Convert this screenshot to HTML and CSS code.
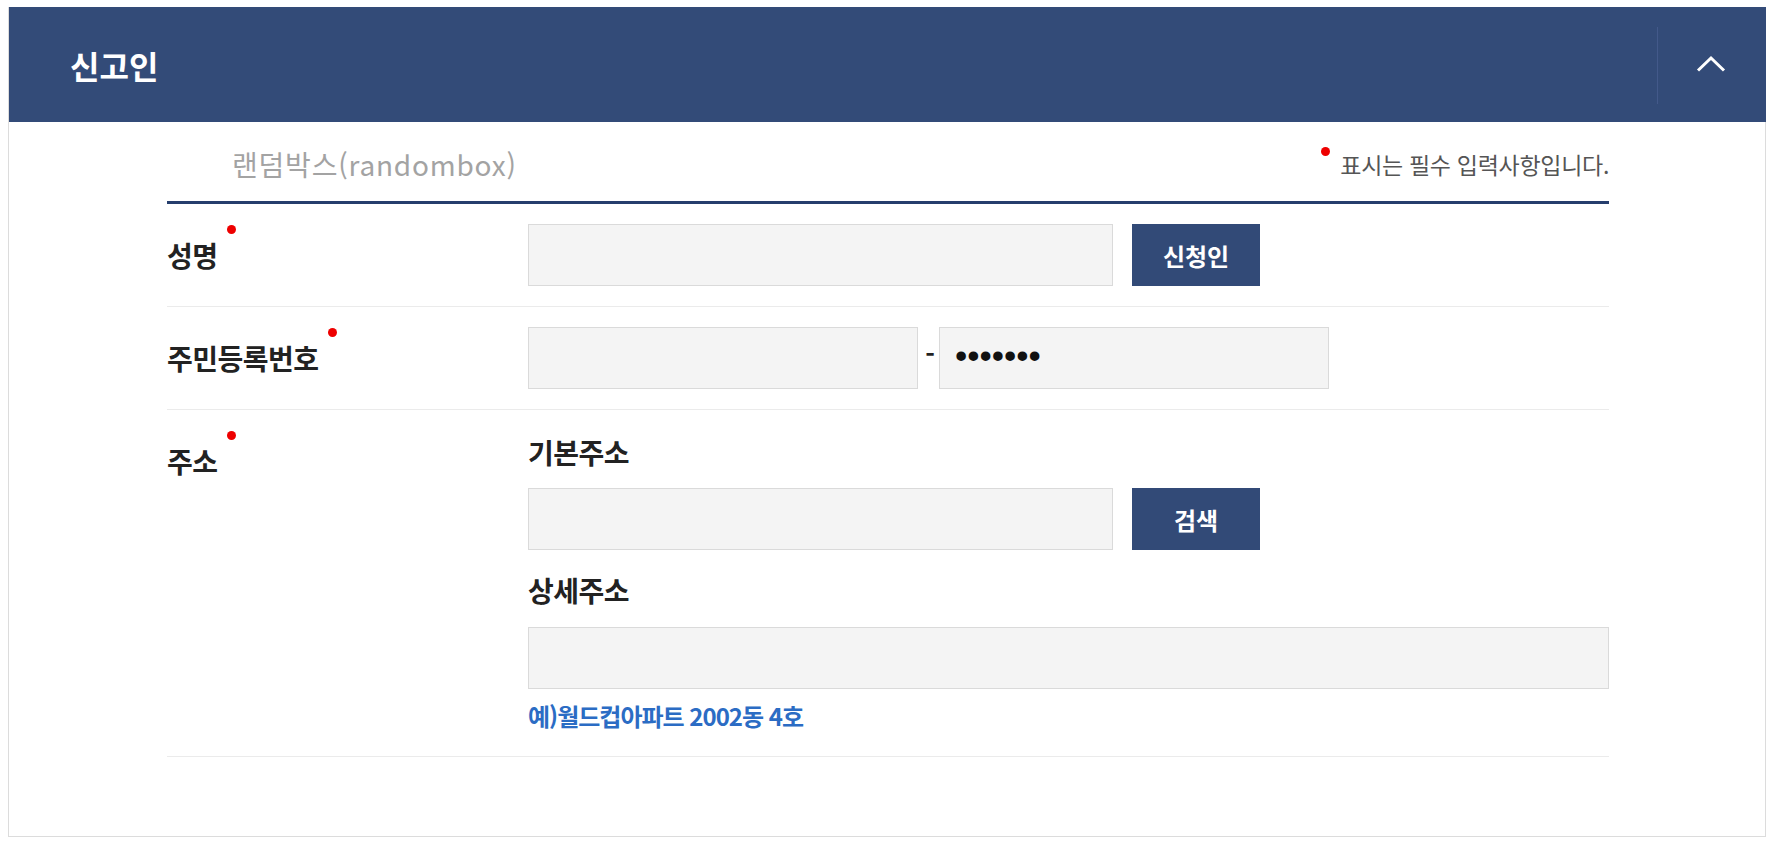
FILE: index.html
```html
<!DOCTYPE html>
<html lang="ko">
<head>
<meta charset="utf-8">
<title>신고인</title>
<link rel="stylesheet" href="styles.css">
</head>
<body>
<section class="panel">
  <header class="panel-head">
    <h2 class="panel-title">신고인</h2>
    <button class="toggle" type="button" aria-label="접기">
      <svg width="30" height="18" viewBox="0 0 30 18"><polyline points="2,15.5 15,3 28,15.5" fill="none" stroke="#ffffff" stroke-width="3"/></svg>
    </button>
  </header>
  <div class="panel-body">
    <div class="form-top">
      <span class="org">랜덤박스(randombox)</span>
      <span class="req-note"><i class="req-dot"></i>표시는 필수 입력사항입니다.</span>
    </div>

    <div class="row">
      <div class="label"><span class="req">성명</span></div>
      <div class="field">
        <div class="inline">
          <input class="input w-mid" type="text">
          <button class="btn" type="button">신청인</button>
        </div>
      </div>
    </div>

    <div class="row">
      <div class="label"><span class="req">주민등록번호</span></div>
      <div class="field">
        <div class="inline">
          <input class="input w-half" type="text">
          <span class="dash">-</span>
          <input class="input w-half pw" type="password" value="1234567">
        </div>
      </div>
    </div>

    <div class="row">
      <div class="label"><span class="req">주소</span></div>
      <div class="field">
        <div class="sub-label">기본주소</div>
        <div class="inline sp-input">
          <input class="input w-mid" type="text">
          <button class="btn" type="button">검색</button>
        </div>
        <div class="sub-label sp-sub">상세주소</div>
        <input class="input w-full sp-input2" type="text">
        <p class="example">예)월드컵아파트 2002동 4호</p>
      </div>
    </div>
  </div>
</section>
</body>
</html>
```

FILE: styles.css
```css
html, body {
  margin: 0;
  padding: 0;
  background: #ffffff;
}

body {
  font-family: "Noto Sans CJK KR", "Noto Sans", sans-serif;
  color: #222222;
}

.panel {
  margin: 7px 0 0 8px;
  width: 1758px;
  box-sizing: border-box;
  border-left: 1px solid #dcdcdc;
  border-right: 1px solid #dcdcdc;
  border-bottom: 1px solid #dcdcdc;
}

.panel-head {
  height: 115px;
  margin: 0 -1px 0 0;
  background: #334b78;
  display: flex;
  align-items: center;
}

.panel-title {
  margin: 0 0 0 61px;
  font-size: 32px;
  font-weight: 700;
  letter-spacing: 0;
  color: #ffffff;
  line-height: 1;
}

.toggle {
  margin-left: auto;
  width: 109px;
  height: 77px;
  margin-top: 1px;
  padding: 0 3px 0 0;
  border: 0;
  border-left: 1px solid #43598a;
  background: transparent;
  display: flex;
  align-items: center;
  justify-content: center;
}

.toggle svg {
  display: block;
  margin-top: -2px;
}

.panel-body {
  padding: 0 156px 79px 158px;
}

.form-top {
  height: 79px;
  border-bottom: 3px solid #263e6d;
  display: flex;
  align-items: center;
  justify-content: space-between;
}

.org {
  margin-left: 65px;
  margin-top: 4px;
  font-size: 28px;
  letter-spacing: 0.8px;
  color: #a3a3a3;
}

.req-note {
  display: flex;
  align-items: center;
  margin-top: 4px;
  font-size: 23px;
  letter-spacing: -0.3px;
  color: #555555;
}

.req-dot {
  width: 9px;
  height: 9px;
  border-radius: 50%;
  background: #ee0000;
  margin-right: 10px;
  position: relative;
  top: -12px;
}

.row {
  display: grid;
  grid-template-columns: 361px 1fr;
  padding: 20px 0;
  border-bottom: 1px solid #ebebeb;
}

.row:last-child {
  padding-bottom: 25px;
}

.label {
  line-height: 62px;
  font-size: 28px;
  font-weight: 700;
  letter-spacing: -0.5px;
  color: #222222;
}

.req {
  position: relative;
  display: inline-block;
}

.req::after {
  content: "";
  position: absolute;
  top: 1px;
  right: -18px;
  width: 9px;
  height: 9px;
  border-radius: 50%;
  background: #ee0000;
}

.inline {
  display: flex;
  align-items: center;
}

.input {
  box-sizing: border-box;
  height: 62px;
  margin: 0;
  border: 1px solid #dadada;
  background: #f4f4f4;
  font-family: "Liberation Sans", sans-serif;
  outline: none;
}

.w-mid {
  width: 585px;
}

.w-half {
  width: 390px;
}

.w-full {
  display: block;
  width: 1081px;
}

.pw {
  padding: 0 0 4px 15px;
  font-size: 35px;
  letter-spacing: 0;
  color: #111111;
}

.dash {
  width: 21px;
  text-align: center;
  font-size: 26px;
  font-weight: 700;
  line-height: 1;
  padding-left: 3px;
  box-sizing: border-box;
  position: relative;
  top: -5px;
  color: #222222;
}

.btn {
  margin-left: 19px;
  width: 128px;
  height: 62px;
  border: 0;
  background: #324a77;
  color: #ffffff;
  font-family: "Noto Sans CJK KR", "Noto Sans", sans-serif;
  font-size: 24px;
  font-weight: 700;
  letter-spacing: 0;
  padding: 0;
}

.sub-label {
  line-height: 44px;
  font-size: 28px;
  font-weight: 700;
  letter-spacing: -0.5px;
  color: #222222;
}

.sp-input {
  margin-top: 14px;
}

.sp-sub {
  margin-top: 18px;
}

.sp-input2 {
  margin-top: 15px;
}

.example {
  margin: 12px 0 0;
  line-height: 30px;
  font-size: 24px;
  font-weight: 700;
  letter-spacing: -1px;
  color: #2b6cc4;
}
```
